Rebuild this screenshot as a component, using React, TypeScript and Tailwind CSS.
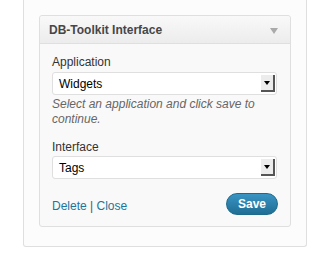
export default function App() {
    return (
        <div className="w-[319px] h-[255px] bg-white font-['Liberation_Sans',Arial,sans-serif]">
            <div className="ml-[23px] w-[284px] h-[247px] border-x border-b border-[#dfdfdf] rounded-b-[3px] bg-[#fcfcfc] pt-[15px] pl-[15px]">
                <div className="w-[252px] h-[212px] border border-[#dfdfdf] rounded-[3px] bg-[#f9f9f9]">
                    <div className="h-[28px] flex items-center justify-between px-[9px] border-b border-[#dfdfdf] rounded-t-[3px] bg-gradient-to-b from-[#f9f9f9] to-[#ececec]">
                        <span className="text-[12px] font-bold text-[#464646]">DB-Toolkit Interface</span>
                        <svg width="8" height="8" viewBox="0 0 8 8" className="mt-[3px] mr-[3px]">
                            <path d="M0 1 L8 1 L4 7 Z" fill="#aaaaaa" />
                        </svg>
                    </div>
                    <div className="px-[12px] pt-[11px]">
                        <div className="text-[12px] text-[#333] leading-[15px]">Application</div>
                        <SelectBox value="Widgets" className="mt-[2px]" />
                        <p className="mt-[2px] text-[12px] italic text-[#666] leading-[15px]">Select an application and click save to continue.</p>
                        <div className="mt-[13px] text-[12px] text-[#333] leading-[15px]">Interface</div>
                        <SelectBox value="Tags" className="mt-[1px]" />
                        <div className="mt-[14px] flex items-center justify-between">
                            <div className="text-[12px] text-[#21759b] mt-[4px]">
                                Delete <span className="text-[#555]">|</span> Close
                            </div>
                            <button className="w-[52px] h-[22px] rounded-full border border-[#1e6a8d] bg-gradient-to-b from-[#3a94c2] to-[#1f6e95] text-white text-[12px] font-bold">
                                Save
                            </button>
                        </div>
                    </div>
                </div>
            </div>
        </div>
    )
}

function SelectBox({ value, className }: { value: string; className?: string }) {
    return (
        <div className={`${className} w-[225px] h-[23px] border border-[#dfdfdf] rounded-[3px] bg-white flex items-center justify-between pl-[6px] pr-[1px]`}>
            <span className="text-[12px] text-black">{value}</span>
            <div className="w-[14px] h-[17px] bg-[#ececec] border-r-2 border-b-2 border-[#555] flex items-center justify-center">
                <svg width="6" height="4" viewBox="0 0 6 4">
                    <path d="M0 0 L6 0 L3 4 Z" fill="#000" />
                </svg>
            </div>
        </div>
    )
}
